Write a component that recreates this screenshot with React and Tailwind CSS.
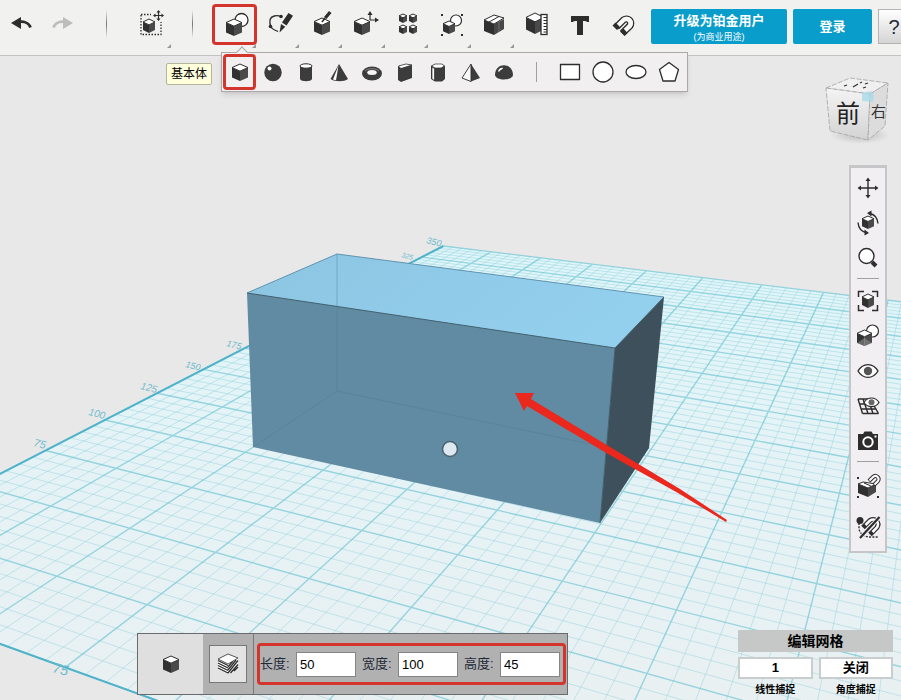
import { useState } from "react";

const DARK = "#2d2d2d";

// Projects a point of the work plane (mm) to the screen.
function project(x, y) {
  const u = x / 175;
  const v = (y - 100) / 250;
  const w = 1 - 0.2304 * u + 0.642 * v;
  return [(434.5 * u + 623 * v + 105) / w, (8.7 * u - 16 * v + 420) / w];
}

function line(x1, y1, x2, y2) {
  const [ax, ay] = project(x1, y1);
  const [bx, by] = project(x2, y2);
  return `M${ax.toFixed(1)} ${ay.toFixed(1)}L${bx.toFixed(1)} ${by.toFixed(1)}`;
}

const GRID_SIZE = 350;
let minorLines = "";
let majorLines = "";
for (let i = 0; i <= GRID_SIZE; i += 5) {
  const d = line(i, 0, i, GRID_SIZE) + line(0, i, GRID_SIZE, i);
  if (i % 25 === 0) majorLines += d;
  else minorLines += d;
}
const outline = line(0, 0, 0, GRID_SIZE) + line(0, 0, GRID_SIZE, 0);
const plane = [
  [0, 0],
  [GRID_SIZE, 0],
  [GRID_SIZE, GRID_SIZE],
  [0, GRID_SIZE],
]
  .map(([x, y]) => project(x, y).join(","))
  .join(" ");

const AXIS_LABELS = [
  { text: "75", x: 33, y: 446, size: 11 },
  { text: "100", x: 88, y: 415, size: 10 },
  { text: "125", x: 140, y: 389, size: 10 },
  { text: "150", x: 185, y: 367, size: 9 },
  { text: "175", x: 226, y: 346, size: 9 },
  { text: "325", x: 401, y: 257, size: 7 },
  { text: "350", x: 426, y: 243, size: 9 },
  { text: "75", x: 52, y: 672, size: 14 },
];

function Scene() {
  return (
    <svg
      className="absolute inset-0 h-full w-full"
      viewBox="0 0 901 700"
      preserveAspectRatio="xMidYMid slice"
      aria-hidden="true"
    >
      <defs>
        <linearGradient id="plane" gradientUnits="userSpaceOnUse" x1="0" y1="240" x2="0" y2="700">
          <stop offset="0" stopColor="#dff6fa" />
          <stop offset="0.45" stopColor="#e5f3f6" />
          <stop offset="1" stopColor="#e9f0f2" />
        </linearGradient>
        <linearGradient id="top" x1="0" y1="0" x2="1" y2="0.3">
          <stop offset="0" stopColor="#8cc5e2" />
          <stop offset="1" stopColor="#93d0ee" />
        </linearGradient>
      </defs>
      <polygon points={plane} fill="url(#plane)" />
      <path d={minorLines} stroke="#8fd0dc" strokeWidth="1" strokeOpacity="0.45" fill="none" />
      <path d={majorLines} stroke="#5fbfd0" strokeWidth="1.4" strokeOpacity="0.6" fill="none" />
      <path d={outline} stroke="#4fb3ca" strokeWidth="2" fill="none" />
      {AXIS_LABELS.map((l) => (
        <text
          key={`${l.text}-${l.x}`}
          fontSize={l.size}
          fontStyle="italic"
          fill="#6dbccd"
          transform={`translate(${l.x} ${l.y}) rotate(14)`}
        >
          {l.text}
        </text>
      ))}

      {/* box */}
      <polygon points="247,293 337,254 664,297 615,348" fill="url(#top)" />
      <polygon points="247,293 615,348 600,523 253,447" fill="#618ba2" />
      <polygon points="615,348 664,297 649,448 600,523" fill="#3d505b" />
      <path d="M247 293 337 254 664 297" stroke="#5f94af" fill="none" />
      <path d="M664 297 615 348 600 523M247 293 615 348" stroke="#41606f" fill="none" />
      <path d="M337 254V391L253 447M337 391 600 446" stroke="#51778c" strokeOpacity="0.4" fill="none" />
      <circle cx="450" cy="449" r="7.5" fill="#dee8f1" stroke="#4b6471" strokeWidth="1.6" />

      {/* arrow */}
      <polygon
        points="515,393 534,393 531,399 610,447 680,489 727,520 726,522 678,493 608,454 527,406 524,411"
        fill="#ea281e"
      />
    </svg>
  );
}

function Cube({ x, y, w = 16, h = 17 }) {
  const m = x + w / 2;
  const t = h * 0.21;
  return (
    <g strokeLinejoin="round">
      <path d={`M${x} ${y + t}L${m} ${y + 2 * t}V${y + h}L${x} ${y + h - t}Z`} fill="#313131" />
      <path d={`M${x + w} ${y + t}L${m} ${y + 2 * t}V${y + h}L${x + w} ${y + h - t}Z`} fill="#4a4a4a" />
      <path
        d={`M${m} ${y}L${x + w} ${y + t}L${m} ${y + 2 * t}L${x} ${y + t}Z`}
        fill="#fff"
        stroke={DARK}
        strokeWidth="1"
      />
    </g>
  );
}

function Icon({ children }) {
  return (
    <svg width="36" height="36" viewBox="0 0 36 36" fill="none" className="shrink-0" aria-hidden="true">
      {children}
    </svg>
  );
}

const ICONS = {
  undo: (
    <>
      <path d="M8 17 18 11V23Z" fill={DARK} />
      <path d="M15 16C21 15 26 17 27.500 21.500" stroke={DARK} strokeWidth="2.800" />
    </>
  ),
  redo: (
    <>
      <path d="M28 17 18 11V23Z" fill="#bdbdbd" />
      <path d="M21 16C15 15 10 17 8.500 21.500" stroke="#bdbdbd" strokeWidth="2.800" />
    </>
  ),
  transform: (
    <>
      <rect x="8" y="8.500" width="20" height="20" stroke={DARK} strokeWidth="1.300" strokeDasharray="1.500 1.500" />
      <path d="M18 4H32V16H22V10H18Z" fill="#f1f1f0" />
      <Cube x={10} y={13} w={12} h={14} />
      <path d="M25.500 5V14M21 9.500H30" stroke={DARK} strokeWidth="1.200" />
      <path d="M25.500 4 23.500 6.500H27.500ZM25.500 15 23.500 12.500H27.500ZM20 9.500 22.500 7.500V11.500ZM31 9.500 28.500 7.500V11.500Z" fill={DARK} />
    </>
  ),
  primitives: (
    <>
      <circle cx="24.500" cy="13" r="6.500" fill="#fff" stroke={DARK} strokeWidth="1.300" />
      <Cube x={9} y={12} w={16} h={17} />
    </>
  ),
  sketch: (
    <>
      <path d="M20 10.500C16 9 10 9.500 9 14C8.500 17 9 19 10 21C11.500 24 14 24 17 25.500" stroke={DARK} strokeWidth="1.300" />
      <circle cx="20" cy="10.500" r="1.800" fill={DARK} />
      <circle cx="9.500" cy="20.500" r="1.800" fill={DARK} />
      <path d="M27.500 7 32 9.800 25.500 19.500 21 16.500ZM20 18 24.300 20.800 18.500 26.500Z" fill={DARK} />
    </>
  ),
  construct: (
    <>
      <Cube x={10} y={12} w={16} h={17} />
      <path d="M18 16 21 12" stroke={DARK} strokeWidth="1.600" />
      <path d="M20 11 25 5 27.500 7 22.500 13Z" fill={DARK} />
    </>
  ),
  modify: (
    <>
      <Cube x={7} y={12} w={16} h={17} />
      <path d="M23 14V7M23 14H30" stroke={DARK} strokeWidth="1.200" />
      <path d="M23 5 20.500 9H25.500ZM32 14 28 11.500V16.500Z" fill={DARK} />
    </>
  ),
  pattern: (
    <>
      <Cube x={9} y={8} w={8} h={9} />
      <Cube x={19} y={8} w={8} h={9} />
      <Cube x={9} y={19} w={8} h={9} />
      <Cube x={19} y={19} w={8} h={9} />
    </>
  ),
  group: (
    <>
      <circle cx="23" cy="14.500" r="5.500" fill="#fff" stroke={DARK} strokeWidth="1.200" />
      <Cube x={10} y={15} w={12} h={13} />
      <path d="M8 8H10V10H8ZM28 8H30V10H28ZM8 28H10V30H8ZM28 28H30V30H28Z" fill={DARK} />
    </>
  ),
  snap: (
    <>
      <path d="M8 14 18 18V29L8 25Z" fill="#303030" />
      <path d="M18 18 28 13V23L18 29Z" fill="#484848" />
      <path d="M8 14 18 9 28 12 18 18Z" fill="#fff" stroke={DARK} strokeWidth="1" strokeLinejoin="round" />
      <path d="M13 16 23 10.500" stroke={DARK} strokeWidth="1" />
      <path d="M23 15.500V26" stroke="#777" strokeWidth="0.800" />
    </>
  ),
  measure: (
    <>
      <Cube x={7} y={7} w={18} h={21} />
      <rect x="22" y="8.500" width="6" height="20" fill="#fff" stroke={DARK} strokeWidth="1.300" />
      <path d="M24.500 11.500H28M24.500 14.500H28M24.500 17.500H28M24.500 20.500H28M24.500 23.500H28M24.500 26H28" stroke={DARK} />
    </>
  ),
  text: <path d="M9 10H27V16H25C24.500 15 24 15 21 15V29H15V15C12 15 11.500 15 11 16H9Z" fill={DARK} />,
  magnet: (
    <>
      <path d="M9.500 19 17 11.500A7.300 7.300 0 0 1 27 22L19.500 29" stroke={DARK} strokeWidth="1.300" />
      <path d="M13.500 23 20.500 16A1.500 1.500 0 0 1 22.500 18L15.500 25" stroke={DARK} strokeWidth="1.300" />
      <path
        d="M11.500 21 18.500 14A4.300 4.300 0 0 1 25 20L17.500 27"
        stroke="#f8f8f8"
        strokeWidth="3.500"
      />
      <path d="M10.500 16.500 15 21 12 24 7.500 19.500ZM18.500 22.500 22.500 27 19.500 30 15 25.500Z" fill={DARK} />
    </>
  ),
};

const SHAPES = {
  cube: <Cube x={10} y={10} w={16} h={17} />,
  sphere: (
    <>
      <circle cx="18" cy="18.500" r="8.700" fill="#3c3c3c" />
      <circle cx="14.500" cy="14.500" r="2" fill="#fff" />
    </>
  ),
  cylinder: (
    <>
      <path d="M12 12V25C13 28 23 28 24 25V12Z" fill="#3c3c3c" />
      <ellipse cx="18" cy="12" rx="6" ry="2.200" fill="#fff" stroke={DARK} strokeWidth="1" />
    </>
  ),
  cone: (
    <>
      <path d="M18 10 27 25C23 28 14 28 9.500 25Z" fill="#3c3c3c" />
      <path d="M17.500 11.500 12 25.500 15 26.300Z" fill="#fff" />
    </>
  ),
  torus: (
    <>
      <ellipse cx="18" cy="19.500" rx="10" ry="7" fill="#3c3c3c" />
      <ellipse cx="18" cy="18.500" rx="4.800" ry="2.500" fill="#f5f5f5" />
      <path d="M11 17C13 14 23 14 25 17" stroke="#999" strokeWidth="0.800" />
    </>
  ),
  wedge: (
    <>
      <path d="M11 12 14 14 25 11V24L14 28 11 26Z" fill="#3c3c3c" />
      <path d="M11.500 12 19 10 25 11 14 14.500Z" fill="#fff" stroke={DARK} strokeWidth="0.800" />
    </>
  ),
  prism: (
    <>
      <path d="M11 12 15 10H22L25 12V25L22 27.500H15L11 25Z" fill="#3c3c3c" />
      <path d="M11.500 12 15 10H22L24.500 12 21 14H15ZM12 13 14.500 14.500V26.500L12 25Z" fill="#fff" stroke={DARK} strokeWidth="0.700" />
    </>
  ),
  pyramid: (
    <>
      <path d="M18 10 27 24 18 27.500Z" fill="#3c3c3c" />
      <path d="M18 10 9 24 18 27.500Z" fill="#f8f8f8" stroke={DARK} strokeWidth="0.900" strokeLinejoin="round" />
    </>
  ),
  dome: (
    <>
      <path d="M9 21C9 8 27 8 27 21C26 27 10 27 9 21Z" fill="#3c3c3c" />
      <path d="M12 17C13 14 16 13 17 14C17 15 14 16 13 18Z" fill="#fff" />
    </>
  ),
};

const OUTLINES = {
  rectangle: <rect x="8.500" y="10.500" width="19" height="15" />,
  circle: <circle cx="18" cy="18" r="10" />,
  ellipse: <ellipse cx="18" cy="18" rx="10" ry="6.500" />,
  polygon: <path d="M18 8.500 27.500 15.500 24 27H12L8.500 15.500Z" />,
};

const VIEW_ICONS = {
  pan: (
    <>
      <path d="M18 9V27M9 18H27" stroke={DARK} strokeWidth="1.400" />
      <path d="M18 7.500 15.500 11H20.500ZM18 28.500 15.500 25H20.500ZM7.500 18 11 15.500V20.500ZM28.500 18 25 15.500V20.500Z" fill={DARK} />
    </>
  ),
  orbit: (
    <>
      <Cube x={12} y={11} w={12} h={13} />
      <path d="M20 8.500C24.500 9.500 27.500 13 28 18.500M16 27.500C11.500 26.500 8.500 23 8 17.500" stroke={DARK} strokeWidth="1.400" />
      <path d="M17 8 21.500 5.500V11.500ZM19 28 14.500 24.500V30.500Z" fill={DARK} />
    </>
  ),
  zoom: (
    <>
      <circle cx="16.500" cy="16" r="7.500" fill="#fff" stroke={DARK} strokeWidth="1.400" />
      <path d="M22 22 26 26" stroke={DARK} strokeWidth="4" />
    </>
  ),
  fit: (
    <>
      <Cube x={12} y={11} w={12} h={14} />
      <path d="M8.500 14V8.500H14M22 8.500H27.500V14M27.500 22V27.500H22M14 27.500H8.500V22" stroke={DARK} strokeWidth="1.500" />
    </>
  ),
  material: (
    <>
      <circle cx="22.500" cy="13" r="6" fill="#fff" stroke={DARK} strokeWidth="1.200" />
      <Cube x={7} y={12} w={15} h={16} />
      <path d="M7 25 14.500 20 22 25 14.500 28Z" fill="#8d8d8d" fillOpacity="0.600" />
    </>
  ),
  visibility: (
    <>
      <path d="M8 18C13 9.500 23 9.500 28 18C23 26.500 13 26.500 8 18Z" fill="#fff" stroke={DARK} strokeWidth="1.400" />
      <circle cx="18" cy="18" r="4.200" fill="#555" />
    </>
  ),
  grid: (
    <>
      <path d="M8 11H20M9.500 16H23M11 21H26M12.500 25.500H28.500M8 11 12.500 25.500M13 11 18 25.500M18 11 23 25.500M23 16 28.500 25.500" stroke={DARK} strokeWidth="1.400" />
      <path d="M14 14.500C17.500 8.500 25.500 8.500 29 14.500C25.500 20 17.500 20 14 14.500Z" fill="#fff" stroke={DARK} strokeWidth="1.200" />
      <circle cx="21.500" cy="14.300" r="3" fill="#666" />
    </>
  ),
  camera: (
    <>
      <path d="M8 11H13L14.500 8.500H21.500L23 11H28V27H8Z" fill={DARK} />
      <circle cx="18" cy="19" r="4.700" stroke="#fff" strokeWidth="2" />
      <path d="M24.500 12.500H26.500V14.500H24.500Z" fill="#fff" />
    </>
  ),
  snapToggle: (
    <>
      <path d="M8 15 18 19V28L8 24Z" fill="#303030" />
      <path d="M18 19 26 15V23L18 28Z" fill="#484848" />
      <path d="M8 15 13 13 26 15 18 19Z" fill="#fff" stroke={DARK} />
      <path d="M14 14 21 17" stroke={DARK} />
      <path d="M19 12 23 8C26 5 30 9 28 12L24 16" stroke={DARK} strokeWidth="4" />
      <path d="M19.500 11.500 23 8C26 5 30 9 28 12L24.500 15.500" stroke="#fff" strokeWidth="2" />
      <path d="M7 8H9V10H7ZM7 27H9V29H7ZM27 27H29V29H27Z" fill={DARK} />
    </>
  ),
  magnetOff: (
    <>
      <path d="M9 13V19C10 24 14 26 18 27H28" stroke={DARK} strokeWidth="1.400" strokeDasharray="2 1.300" />
      <circle cx="10" cy="10.500" r="3.500" fill={DARK} />
      <path d="M13 17.500 20 10.500C25 7.500 30 12.500 27 17.500L20 24.500" stroke={DARK} strokeWidth="5" />
      <path d="M15.500 15 20 10.500C25 7.500 30 12.500 27 17.500L22.500 22" stroke="#fff" strokeWidth="2.500" />
      <path d="M10 28 29.500 7" stroke="#f2eff2" strokeWidth="4" />
      <path d="M10 28 29.500 7" stroke={DARK} strokeWidth="2.200" />
    </>
  ),
};

const TOOLS = [
  { id: "sketch", label: "草图", menu: true },
  { id: "construct", label: "构造", menu: true },
  { id: "modify", label: "修改", menu: true },
  { id: "pattern", label: "阵列", menu: true },
  { id: "group", label: "分组", menu: true },
  { id: "snap", label: "合并", menu: true },
  { id: "measure", label: "测量" },
  { id: "text", label: "文本" },
  { id: "magnet", label: "吸附" },
];

const DIMENSIONS = [
  { id: "length", label: "长度:", value: "50" },
  { id: "width", label: "宽度:", value: "100" },
  { id: "height", label: "高度:", value: "45" },
];

function ToolButton({ label, menu, children }) {
  return (
    <button type="button" aria-label={label} className="relative flex h-12 w-[43px] items-center justify-center">
      {children}
      {menu && <MenuCorner />}
    </button>
  );
}

function MenuCorner() {
  return (
    <svg width="4" height="4" viewBox="0 0 4 4" className="absolute right-px bottom-0" aria-hidden="true">
      <path d="M4 0V4H0Z" fill="#999" />
    </svg>
  );
}

function Separator() {
  return <span className="h-7 w-px bg-linear-to-b from-transparent via-neutral-500 to-transparent" />;
}

function ShapeMenu() {
  return (
    <div className="absolute top-[52px] left-[9px] z-20 flex h-10 w-[467px] items-center border border-[#a9a9a9] bg-[#f1eff0] pl-px shadow-md">
      <span className="absolute -top-[5px] left-4 h-2 w-2 rotate-45 border-t border-l border-[#a9a9a9] bg-[#f1eff0]" />
      {Object.keys(SHAPES).map((id) => (
        <button
          key={id}
          type="button"
          aria-label={id}
          className={`flex h-9 w-[33px] items-center justify-center ${
            id === "cube" ? "relative rounded-sm border-[3px] border-[#d3352c]" : ""
          }`}
        >
          <Icon>{SHAPES[id]}</Icon>
        </button>
      ))}
      <span className="flex w-[33px] justify-center">
        <span className="h-5 w-px bg-neutral-400" />
      </span>
      {Object.keys(OUTLINES).map((id) => (
        <button key={id} type="button" aria-label={id} className="flex w-[33px] items-center justify-center">
          <Icon>
            <g fill="#fff" stroke={DARK} strokeWidth="1.300" strokeLinejoin="round">
              {OUTLINES[id]}
            </g>
          </Icon>
        </button>
      ))}
    </div>
  );
}

function Toolbar() {
  return (
    <header className="relative z-10 flex h-14 items-start border-b border-[#c4c4c4] bg-[#f1f1f0]">
      <div className="flex h-12 shrink-0 items-center">
        <button type="button" aria-label="撤消" className="flex w-[42px] justify-center">
          <Icon>{ICONS.undo}</Icon>
        </button>
        <button type="button" aria-label="重做" className="flex w-[42px] justify-center">
          <Icon>{ICONS.redo}</Icon>
        </button>
        <span className="flex w-[45px] justify-center">
          <Separator />
        </span>
        <ToolButton label="变换" menu>
          <Icon>{ICONS.transform}</Icon>
        </ToolButton>
        <span className="flex w-10 justify-center">
          <Separator />
        </span>
        <div className="relative h-12">
          <button
            type="button"
            aria-label="基本体"
            className="mt-1 flex h-[41px] w-[45px] items-center justify-center rounded-sm border-[3px] border-[#d3352c]"
          >
            <Icon>{ICONS.primitives}</Icon>
          </button>
          <MenuCorner />
          <ShapeMenu />
          <span
            role="tooltip"
            className="absolute top-[63px] -left-[46px] rounded-xs border border-[#b5b59a] bg-[#ffffdc] px-1 text-xs leading-5 whitespace-nowrap text-black"
          >
            基本体
          </span>
        </div>
        {TOOLS.map((t) => (
          <ToolButton key={t.id} label={t.label} menu={t.menu}>
            <Icon>{ICONS[t.id]}</Icon>
          </ToolButton>
        ))}
      </div>
      <div className="ml-[7px] flex shrink-0 gap-1.5 pt-[9px]">
        <button type="button" className="h-[35px] w-[136px] rounded-xs bg-[#089dcb] text-white">
          <span className="block text-[13px] leading-5 font-bold">升级为铂金用户</span>
          <span className="block text-[9px] leading-3">(为商业用途)</span>
        </button>
        <button type="button" className="h-[35px] w-[79px] rounded-xs bg-[#089dcb] text-[13px] font-bold text-white">
          登录
        </button>
        <button
          type="button"
          aria-label="帮助"
          className="h-[35px] w-8 border border-[#b3b3b3] bg-linear-to-b from-white to-[#d5d5d5] text-xl text-gray-800"
        >
          ?
        </button>
      </div>
    </header>
  );
}

function ViewCube() {
  return (
    <svg
      width="70"
      height="72"
      viewBox="0 0 70 72"
      className="absolute top-[74px] right-[9px]"
      role="img"
      aria-label="前"
    >
      <defs>
        <linearGradient id="vcFront" x1="0" y1="0" x2="0" y2="1">
          <stop offset="0" stopColor="#f4f4f4" />
          <stop offset="1" stopColor="#d3d3d3" />
        </linearGradient>
        <radialGradient id="vcShadow">
          <stop offset="0" stopColor="#bbb" />
          <stop offset="1" stopColor="#bbb" stopOpacity="0" />
        </radialGradient>
      </defs>
      <ellipse cx="38" cy="61" rx="30" ry="9" fill="url(#vcShadow)" />
      <g stroke="#a2a2a2" strokeDasharray="5 1.500" strokeWidth="0.800">
        <path d="M4 14 28 4 66 9 48 20Z" fill="#f0f0f0" />
        <path d="M4 14 48 20 46 66 8 57Z" fill="url(#vcFront)" />
        <path d="M48 20 66 9 63 52 46 66Z" fill="#dcdcdc" />
      </g>
      <path d="M40 19 49 17 52 21 51 28 40 27Z" fill="#a9dbe8" fillOpacity="0.800" />
      <text x="14" y="48" fontSize="24" fill="#222" className="font-['Noto_Sans_CJK_SC',sans-serif]">
        前
      </text>
      <text x="49" y="43" fontSize="15" fill="#333" className="font-['Noto_Sans_CJK_SC',sans-serif]">
        右
      </text>
      <path d="M22 12 25 11M31 13 36 10M38 9 40 8M43 10 46 9M41 14 44 13" stroke="#333" strokeWidth="1.300" />
    </svg>
  );
}

const VIEW_GROUPS = [
  [
    { id: "pan", label: "平移" },
    { id: "orbit", label: "旋转" },
    { id: "zoom", label: "缩放" },
  ],
  [
    { id: "fit", label: "适合视图" },
    { id: "material", label: "材质" },
    { id: "visibility", label: "可见性" },
    { id: "grid", label: "网格可见性" },
    { id: "camera", label: "截图" },
  ],
];

function ViewButton({ item }) {
  return (
    <button type="button" aria-label={item.label} className="flex h-[35px] w-[34px] items-center justify-center">
      <Icon>{VIEW_ICONS[item.id]}</Icon>
    </button>
  );
}

function ViewBar() {
  return (
    <nav className="absolute top-[165px] right-[14px] flex w-[38px] flex-col items-center gap-2 border-2 border-t-[3px] border-[#c6c6c8] bg-[#f2eff2] pt-[2px] pb-[3px]">
      {VIEW_GROUPS.map((group) => (
        <div key={group[0].id} className="relative">
          {group.map((item) => (
            <ViewButton key={item.id} item={item} />
          ))}
          <span className="absolute -bottom-1 left-1.5 h-px w-[22px] bg-neutral-400" />
        </div>
      ))}
      <div className="flex flex-col gap-1.5 py-[3px]">
        <ViewButton item={{ id: "snapToggle", label: "捕捉" }} />
        <ViewButton item={{ id: "magnetOff", label: "关闭吸附" }} />
      </div>
    </nav>
  );
}

function DimensionPanel() {
  const [dims, setDims] = useState(DIMENSIONS);

  function handleChange(id, value) {
    setDims(dims.map((d) => (d.id === id ? { ...d, value } : d)));
  }

  return (
    <form className="absolute bottom-[5px] left-[137px] flex h-[62px] items-stretch border border-[#6b6b6b] bg-[#b1b1b1]">
      <button type="button" aria-label="实体" className="flex w-[65px] items-center justify-center bg-[#dfdfdf]">
        <Icon>
          <Cube x={10} y={10} w={16} h={17} />
        </Icon>
      </button>
      <div className="flex w-[51px] items-center justify-center border-r border-[#777]">
        <button
          type="button"
          aria-label="图层"
          className="flex h-[38px] w-[38px] items-center justify-center border border-[#777] bg-[#e3e3e3]"
        >
          <Icon>
            <path d="M8 13 18 18V28L8 23ZM18 18 28 12V22L18 28Z" fill="#fff" />
            <path
              d="M8 14.500 18 19.500M8 17 18 22M8 19.500 18 24.500M8 22 18 27M18 21 23 15M18 24 26 14M18 27 28 14.500M20.500 27 28 18.500M24 25 28 21"
              stroke={DARK}
              strokeWidth="1.300"
            />
            <path d="M8 13 18 8 28 12 18 18Z" fill="#fff" stroke={DARK} strokeWidth="0.800" />
          </Icon>
        </button>
      </div>
      <div className="my-[9px] mr-px ml-[3px] flex items-center gap-1.5 rounded-sm border-[3px] border-[#d3352c] pr-[3px]">
        {dims.map((d) => (
          <div key={d.id} className="flex items-center">
            <label htmlFor={d.id} className="w-9 text-[13px] text-gray-800">
              {d.label}
            </label>
            <input
              id={d.id}
              type="text"
              value={d.value}
              onChange={(e) => handleChange(d.id, e.target.value)}
              className="h-[25px] w-[60px] border border-[#858585] bg-white px-[3px] text-[13px] text-black"
            />
          </div>
        ))}
      </div>
    </form>
  );
}

function SnapPanel() {
  return (
    <div className="absolute right-2 bottom-0 w-[155px] text-black">
      <button type="button" className="block h-[22px] w-full bg-[#c6c7c7] text-sm leading-[22px] font-bold">
        编辑网格
      </button>
      <div className="mt-[5px] grid grid-cols-2 gap-1.5 text-center">
        <div>
          <button
            type="button"
            aria-labelledby="linear-snap"
            className="block h-[22px] w-full border-2 border-[#c9cdce] bg-white text-[13px] leading-[18px] font-bold"
          >
            1
          </button>
          <p id="linear-snap" className="pt-px text-[10px] leading-5 font-bold">
            线性捕捉
          </p>
        </div>
        <div>
          <button
            type="button"
            aria-labelledby="angle-snap"
            className="block h-[22px] w-full border-2 border-[#c9cdce] bg-white text-[13px] leading-[18px] font-bold"
          >
            关闭
          </button>
          <p id="angle-snap" className="pt-px text-[10px] leading-5 font-bold">
            角度捕捉
          </p>
        </div>
      </div>
    </div>
  );
}

export default function App() {
  return (
    <div
      lang="zh-CN"
      className="relative min-h-screen overflow-hidden bg-[#e9e8e9] font-['Liberation_Sans','Noto_Sans_CJK_SC',sans-serif]"
    >
      <Scene />
      <Toolbar />
      <ViewCube />
      <ViewBar />
      <DimensionPanel />
      <SnapPanel />
    </div>
  );
}
